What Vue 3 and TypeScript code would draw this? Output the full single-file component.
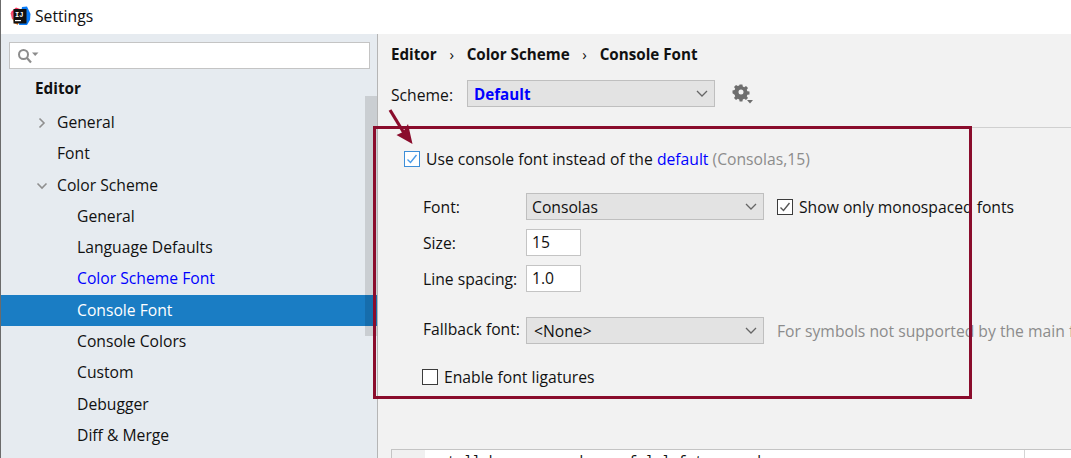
<script setup lang="ts">
interface NavItem {
  label: string
  level: number
  arrow?: 'right' | 'down'
  modified?: boolean
  selected?: boolean
}
const items: NavItem[] = [
  { label: 'General', level: 1, arrow: 'right' },
  { label: 'Font', level: 1 },
  { label: 'Color Scheme', level: 1, arrow: 'down' },
  { label: 'General', level: 2 },
  { label: 'Language Defaults', level: 2 },
  { label: 'Color Scheme Font', level: 2, modified: true },
  { label: 'Console Font', level: 2, selected: true },
  { label: 'Console Colors', level: 2 },
  { label: 'Custom', level: 2 },
  { label: 'Debugger', level: 2 },
  { label: 'Diff & Merge', level: 2 },
]
</script>

<template>
  <div class="window">
    <header class="titlebar">
      <svg class="logo" width="21" height="20" viewBox="0 0 21 20">
        <path d="M1 6 L6 1.5 L10 3 L8 12 L3 12 Z" fill="#fe315d" />
        <path d="M0.5 7 L5 6 L5 15 L2 13 Z" fill="#f5506e" />
        <path d="M3 12 L8 11 L8 19 L4 17 Z" fill="#f97a12" />
        <path d="M12 1 L17 0.5 L20.5 8 L20 14 L17 19 L9 19 Z" fill="#087cfa" />
        <rect x="3.5" y="3" width="13" height="14.5" fill="#111" />
        <text x="5" y="10.5" class="logo-text">IJ</text>
        <rect x="5" y="14" width="6" height="1.2" fill="#fff" />
      </svg>
      <span class="title">Settings</span>
    </header>
    <div class="body">
      <aside class="sidebar">
        <div class="search">
          <svg width="24" height="16" viewBox="0 0 24 16">
            <circle cx="6.5" cy="6.5" r="4.5" fill="none" stroke="#8c8c8c" stroke-width="2" />
            <path d="M10 10 L14 14.5" stroke="#8c8c8c" stroke-width="2.2" />
            <path d="M15 4.5 H21.5 L18.2 8 Z" fill="#8c8c8c" />
          </svg>
        </div>
        <div class="section">Editor</div>
        <ul class="nav">
          <li
            v-for="(item, i) in items"
            :key="i"
            class="nav-item"
            :class="[`level-${item.level}`, { selected: item.selected, modified: item.modified }]"
          >
            <svg v-if="item.arrow" class="arrow" width="12" height="12" viewBox="0 0 12 12">
              <path
                :d="item.arrow === 'right' ? 'M3.5 1.5 L8 6 L3.5 10.5' : 'M1.5 3.5 L6 8 L10.5 3.5'"
                fill="none"
                stroke="#8f8f8f"
                stroke-width="1.6"
              />
            </svg>
            <span>{{ item.label }}</span>
          </li>
        </ul>
        <div class="scrollbar"></div>
      </aside>
      <main class="content">
        <nav class="crumbs">
          <span>Editor</span><i>›</i><span>Color Scheme</span><i>›</i><span>Console Font</span>
        </nav>
        <div class="scheme-row">
          <span class="scheme-label">Scheme:</span>
          <div class="combo scheme-combo">
            <b class="scheme-value">Default</b>
            <svg class="chev" width="12" height="8" viewBox="0 0 12 8"><path d="M1 1 L6 6 L11 1" fill="none" stroke="#666" stroke-width="1.3" /></svg>
          </div>
          <svg class="gear" width="22" height="22" viewBox="0 0 22 22">
            <path
              fill="#6e6e6e"
              fill-rule="evenodd"
              d="M7.6 1.5h2.8l.4 2.1 1.4.6 1.8-1.2 2 2-1.2 1.8.6 1.4 2.1.4v2.8l-2.1.4-.6 1.4 1.2 1.8-2 2-1.8-1.2-1.4.6-.4 2.1H7.6l-.4-2.1-1.4-.6-1.8 1.2-2-2 1.2-1.8-.6-1.4L.5 10.3V7.5l2.1-.4.6-1.4L2 3.9l2-2 1.8 1.2 1.4-.6zM9 6.4a2.5 2.5 0 1 0 0 5 2.5 2.5 0 0 0 0-5z"
            />
            <path d="M15 17 H21 L18 20.5 Z" fill="#6e6e6e" />
          </svg>
        </div>
        <div class="rule"></div>
        <div class="console-row">
          <span class="check blue">
            <svg width="14" height="14" viewBox="0 0 14 14"><path d="M2.5 7.5 L5.5 10.5 L11.5 3" fill="none" stroke="#4a9be8" stroke-width="1.4" /></svg>
          </span>
          <span>Use console font instead of the <a>default</a> <em>(Consolas,15)</em></span>
        </div>
        <div class="form">
          <div class="form-row font-row">
            <label>Font:</label>
            <div class="combo wide"><span>Consolas</span>
              <svg class="chev" width="12" height="8" viewBox="0 0 12 8"><path d="M1 1 L6 6 L11 1" fill="none" stroke="#666" stroke-width="1.3" /></svg>
            </div>
            <span class="check dark">
              <svg width="14" height="14" viewBox="0 0 14 14"><path d="M2.5 7.5 L5.5 10.5 L11.5 3" fill="none" stroke="#555" stroke-width="1.4" /></svg>
            </span>
            <span>Show only monospaced fonts</span>
          </div>
          <div class="form-row size-row">
            <label>Size:</label>
            <div class="field">15</div>
          </div>
          <div class="form-row spacing-row">
            <label>Line spacing:</label>
            <div class="field">1.0</div>
          </div>
          <div class="form-row fallback-row">
            <label>Fallback font:</label>
            <div class="combo wide none-combo"><span>&lt;None&gt;</span>
              <svg class="chev" width="12" height="8" viewBox="0 0 12 8"><path d="M1 1 L6 6 L11 1" fill="none" stroke="#666" stroke-width="1.3" /></svg>
            </div>
            <span class="hint">For symbols not supported by the main font</span>
          </div>
          <div class="form-row ligature-row">
            <span class="check dark"></span>
            <span>Enable font ligatures</span>
          </div>
        </div>
        <div class="preview">
          <div class="gutter"></div>
          <div class="code"><code>a tall house on a barn of lol fat a used</code></div>
          <div class="preview-side"></div>
        </div>
      </main>
    </div>
    <div class="annotation"></div>
    <svg class="pointer" width="40" height="50" viewBox="0 0 40 50">
      <path d="M2 2 L16 25" stroke="#8a0c2c" stroke-width="3.2" fill="none" />
      <path d="M24.5 36 L8.5 27 L15 24 L20 16 Z" fill="#8a0c2c" />
    </svg>
  </div>
</template>

<style>
html, body { margin: 0; overflow: hidden; background: #f2f2f2; }
</style>

<style scoped>
.window {
  position: relative;
  width: 1071px;
  height: 458px;
  overflow: hidden;
  display: flex;
  flex-direction: column;
  font-family: "Open Sans", "Noto Sans", sans-serif;
  font-size: 15.7px;
  color: #111;
  background: #f2f2f2;
}
.titlebar {
  height: 34px;
  flex: none;
  background: #fff;
  display: flex;
  align-items: center;
  padding-left: 9px;
  border-left: 1px solid #6b6b6b;
}
.logo { flex: none; margin-right: 4px; margin-top: -3px; }
.logo-text { font: bold 7px "Liberation Mono", monospace; fill: #fff; }
.title { font-size: 15.7px; margin-top: -2px; }
.body { flex: 1; display: flex; min-height: 0; }
.sidebar {
  position: relative;
  width: 376px;
  flex: none;
  background: #e6ebf0;
  border-left: 1px solid #6b6b6b;
  border-right: 1px solid #b5b5b5;
}
.search {
  box-sizing: border-box;
  width: 361px;
  height: 27px;
  margin: 8px 0 0 8px;
  background: #fff;
  border: 1px solid #c4c4c4;
  display: flex;
  align-items: center;
  padding-left: 7px;
}
.section {
  font-weight: 700;
  font-size: 15.3px;
  margin: 4px 0 3px 34px;
  height: 31px;
  line-height: 31px;
}
.nav { list-style: none; margin: 0; padding: 0; }
.nav-item {
  position: relative;
  height: 31.3px;
  line-height: 31.3px;
  white-space: nowrap;
}
.level-1 { padding-left: 56px; }
.level-2 { padding-left: 76px; }
.arrow { position: absolute; left: 35px; top: 10px; }
.modified { color: #0000ff; }
.selected { background: #1a7dc4; color: #fff; }
.scrollbar {
  position: absolute;
  right: 0;
  top: 62px;
  width: 12px;
  height: 240px;
  background: rgba(0, 0, 0, 0.12);
}
.content { flex: 1; min-width: 0; white-space: nowrap; overflow: hidden; }
.crumbs {
  display: flex;
  align-items: center;
  font-weight: 700;
  font-size: 15.2px;
  height: 20px;
  margin: 10px 0 0 13px;
}
.crumbs i { font-style: normal; font-weight: 400; width: 30px; text-align: center; }
.scheme-row {
  display: flex;
  align-items: center;
  margin: 16px 0 0 13px;
  height: 27px;
}
.scheme-label { width: 76px; padding-top: 2px; }
.combo {
  box-sizing: border-box;
  flex: none;
  height: 27px;
  background: #e3e3e3;
  border: 1px solid #bfbfbf;
  display: flex;
  align-items: center;
  justify-content: space-between;
  padding: 0 6px 0 5px;
}
.scheme-combo { width: 248px; padding-left: 6px; font-size: 15.2px; }
.none-combo { padding-left: 7px; }
.scheme-value { color: #0000ff; }
.gear { margin-left: 17px; margin-top: 1px; }
.rule { height: 1px; background: #d0d0d0; margin-top: 20px; }
.console-row {
  display: flex;
  align-items: center;
  margin: 21px 0 0 26px;
  height: 20px;
}
.check {
  box-sizing: border-box;
  width: 16px;
  height: 16px;
  flex: none;
  background: #fff;
  display: inline-flex;
  align-items: center;
  justify-content: center;
  margin-right: 6px;
}
.check.blue { border: 1px solid #3d8ed8; }
.check.dark { border: 1px solid #3c3c3c; }
.console-row a { color: #0000ff; }
.console-row em { font-style: normal; color: #8c8c8c; }
.form { margin: 24px 0 0 45px; }
.form-row { display: flex; align-items: center; }
.form-row label { width: 103px; flex: none; }
.wide { width: 238px; }
.font-row { height: 27px; }
.font-row .check { margin-left: 13px; }
.size-row { height: 27px; margin-top: 9px; }
.spacing-row { height: 27px; margin-top: 9px; }
.fallback-row { height: 27px; margin-top: 25px; }
.fallback-row label { padding-bottom: 3px; }
.ligature-row { height: 20px; margin-top: 23px; margin-left: -1px; }
.field {
  box-sizing: border-box;
  width: 55px;
  height: 27px;
  background: #fff;
  border: 1px solid #c4c4c4;
  line-height: 25px;
  padding-left: 5px;
}
.hint { flex: none; margin-left: 13px; color: #8c8c8c; }
.preview {
  display: flex;
  margin: 62px 0 0 13px;
  height: 60px;
  border-top: 1px solid #c4c4c4;
  background: #fff;
}
.gutter { width: 33px; background: #f0f0f0; border-left: 1px solid #c4c4c4; flex: none; }
.code { flex: 1; padding: 5px 0 0 6px; }
.code code { font: 13.75px "Liberation Mono", monospace; display: block; }
.preview-side { width: 46px; border-left: 1px solid #d4d4d4; flex: none; }
.annotation {
  position: absolute;
  left: 373px;
  top: 126px;
  width: 599px;
  height: 273px;
  box-sizing: border-box;
  border: 3px solid #8a0c2c;
  pointer-events: none;
}
.pointer { position: absolute; left: 388px; top: 108px; pointer-events: none; }
</style>
